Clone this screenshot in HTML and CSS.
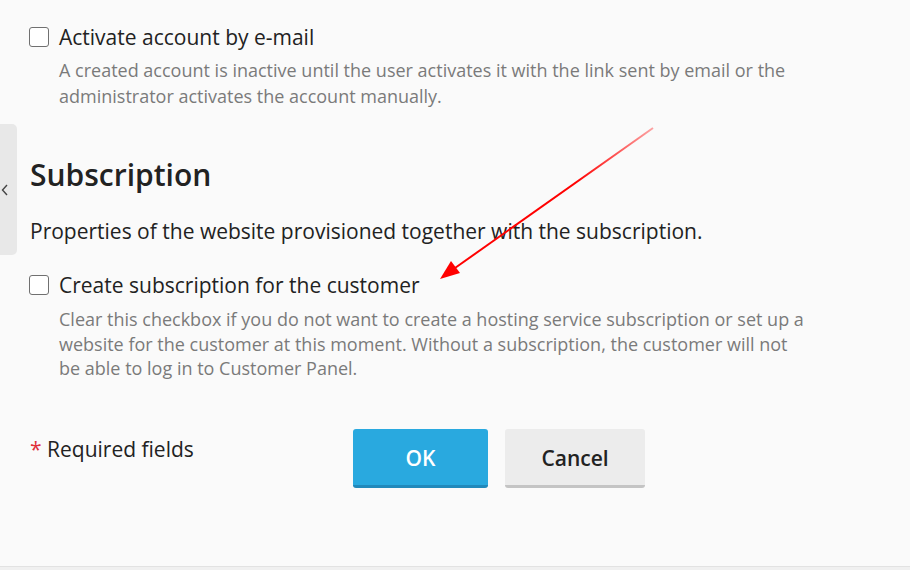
FILE: index.html
```html
<!DOCTYPE html>
<html lang="en">
<head>
    <meta charset="UTF-8">
    <meta name="viewport" content="width=device-width, initial-scale=1.0">
    <title>Add Customer</title>
    <link rel="stylesheet" href="styles.css">
</head>
<body>
    <div class="page">
        <div class="side-tab">
            <svg width="8" height="12" viewBox="0 0 8 12"><polyline points="6,1 1.5,6 6,11" fill="none" stroke="#444" stroke-width="1.4"/></svg>
        </div>

        <div class="form">
            <label class="check-row">
                <span class="checkbox"></span>
                <span class="check-label">Activate account by e-mail</span>
            </label>
            <p class="hint">A created account is inactive until the user activates it with the link sent by email or the administrator activates the account manually.</p>

            <h2 class="section-title">Subscription</h2>
            <p class="section-text">Properties of the website provisioned together with the subscription.</p>

            <label class="check-row second">
                <span class="checkbox"></span>
                <span class="check-label">Create subscription for the customer</span>
            </label>
            <p class="hint hint-tight">Clear this checkbox if you do not want to create a hosting service subscription or set up a website for the customer at this moment. Without a subscription, the customer will not be able to log in to Customer Panel.</p>

            <div class="form-footer">
                <div class="required"><span class="star">*</span> Required fields</div>
                <div class="buttons">
                    <button class="button ok">OK</button>
                    <button class="button cancel">Cancel</button>
                </div>
            </div>
        </div>

        <svg class="arrow" width="910" height="570" viewBox="0 0 910 570">
            <defs>
                <linearGradient id="fade" x1="653" y1="128" x2="460" y2="265" gradientUnits="userSpaceOnUse">
                    <stop offset="0" stop-color="#ff0000" stop-opacity="0.35"/>
                    <stop offset="0.4" stop-color="#ff0000" stop-opacity="1"/>
                </linearGradient>
            </defs>
            <line x1="653" y1="128" x2="455" y2="268" stroke="url(#fade)" stroke-width="2"/>
            <polygon points="440,279 451,261 460,273" fill="#ff0000"/>
        </svg>
    </div>
</body>
</html>
```

FILE: styles.css
```css
body {
    margin: 0;
    background: #f0f0f0;
    font-family: "Open Sans", Arial, sans-serif;
    color: #222;
}
.page {
    position: relative;
    height: 566px;
    background: #fafafa;
    border-bottom: 1px solid #e2e2e2;
    overflow: hidden;
}
.side-tab {
    position: absolute;
    left: 0;
    top: 124px;
    width: 17px;
    height: 131px;
    background: #e8e8e8;
    border-radius: 0 5px 5px 0;
    display: flex;
    align-items: center;
    padding-left: 1px;
    box-sizing: border-box;
}
.form {
    padding: 27px 0 0 30px;
}
.check-row {
    display: flex;
    align-items: center;
    gap: 10px;
    height: 20px;
    margin-left: -1px;
}
.check-row.second {
    margin-top: 30px;
}
.checkbox {
    width: 20px;
    height: 20px;
    box-sizing: border-box;
    border: 1.5px solid #707070;
    border-radius: 3px;
    background: #fff;
}
.check-label {
    font-size: 21px;
    line-height: 20px;
    color: #222;
}
.hint {
    margin: 10px 0 0 29px;
    width: 749px;
    font-size: 18px;
    line-height: 26px;
    color: #7a7a7a;
}
.hint-tight {
    margin-top: 12px;
    line-height: 24.5px;
}
.section-title {
    margin: 49px 0 0;
    font-size: 30px;
    line-height: 34px;
    font-weight: 600;
    color: #222;
}
.section-text {
    margin: 25px 0 0;
    font-size: 21px;
    line-height: 28px;
    color: #222;
}
.form-footer {
    display: flex;
    margin-top: 48px;
}
.required {
    width: 323px;
    padding-top: 8px;
    font-size: 21px;
    line-height: 24px;
}
.star {
    color: #e0303a;
}
.buttons {
    display: flex;
    gap: 17px;
}
.button {
    height: 59px;
    border: none;
    border-radius: 3px;
    font-family: "Open Sans", Arial, sans-serif;
    font-size: 21px;
    font-weight: 600;
    cursor: pointer;
    padding: 3px 0 0;
}
.ok {
    width: 135px;
    background: #29a9df;
    border-bottom: 3px solid #2189bb;
    color: #fff;
}
.cancel {
    width: 140px;
    background: #ececec;
    border-bottom: 3px solid #c4c4c4;
    color: #222;
}
.arrow {
    position: absolute;
    left: 0;
    top: 0;
    pointer-events: none;
}
```
